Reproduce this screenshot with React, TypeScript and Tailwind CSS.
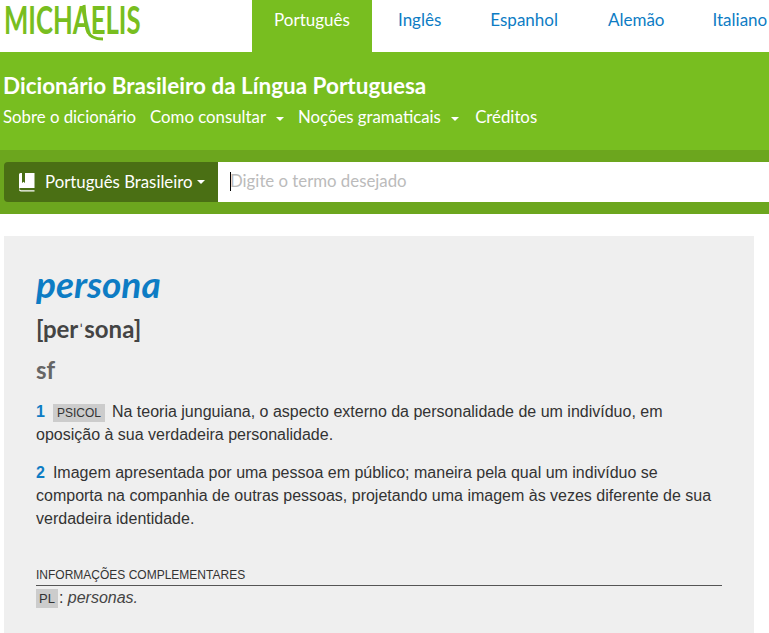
const tabs = ["Português", "Inglês", "Espanhol", "Alemão", "Italiano"];
const head = { fontFamily: "Lato, 'Open Sans', sans-serif" };
const body = { fontFamily: "'Liberation Sans', Arial, sans-serif" };

const Caret = () => <span className="ml-[6px] inline-block align-middle border-x-[4px] border-t-[4px] border-x-transparent border-t-white" />;

const App = () => {
  return (
    <div className="w-[769px] h-[633px] overflow-hidden bg-white" style={head}>
      <nav className="h-[52px] flex">
        <div className="w-[252px] shrink-0 relative pl-[4px]">
          <span className="block origin-left -mt-[3px] scale-x-[0.66] text-[39px] leading-[44px] font-bold text-[#78be20] whitespace-nowrap">MICHAELIS</span>
          <svg className="absolute left-[76px] top-[4px]" width="30" height="38" viewBox="0 0 30 38" fill="none">
            <path d="M8 1 C 9 12, 9 22, 12 28 C 14 33, 20 35, 27 35" stroke="#78be20" strokeWidth="3" />
          </svg>
        </div>
        <div className="flex text-[17px] shrink-0">
          {tabs.map((t, i) => (
            <a key={t} className={`h-[52px] flex items-center pb-[12px] whitespace-nowrap ${i === 0 ? "w-[120px] justify-center bg-[#78be20] text-white" : "text-[#0d7cc4]"} ${i === 1 ? "ml-[26px]" : ""} ${i === 2 ? "ml-[49px]" : ""} ${i === 3 ? "ml-[50px]" : ""} ${i === 4 ? "ml-[48px]" : ""}`}>
              {t}
            </a>
          ))}
        </div>
      </nav>

      <header className="h-[98px] bg-[#78be20] text-white pl-[3px] pt-[21px]">
        <h1 className="text-[22.5px] leading-[26px] font-bold">Dicionário Brasileiro da Língua Portuguesa</h1>
        <div className="flex mt-[6px] gap-[14px] text-[16.8px] leading-[24px] whitespace-nowrap">
          <a>Sobre o dicionário</a>
          <a>Como consultar <Caret /></a>
          <a>Noções gramaticais <Caret /></a>
          <a className="ml-[2px]">Créditos</a>
        </div>
      </header>

      <div className="h-[64px] bg-[#6ca61e] pl-[4px] pt-[12px]">
        <div className="flex h-[40px]">
          <button className="w-[214px] bg-[#4a6f14] rounded-l-[4px] text-white flex items-center pl-[14px] text-[16.8px] whitespace-nowrap">
            <svg width="17" height="19" viewBox="0 0 17 19" fill="white">
              <path d="M1 1.5 A1.5 1.5 0 0 1 2.5 0 H4 V10 L5.5 8.8 L7 10 V0 H16.5 V15 H2.5 A1.5 1.5 0 0 0 1 16 Z" />
              <path d="M1 16.5 A2 2 0 0 0 3 18.5 H16.5 V17.2 H3 A1 1 0 0 1 2 16.5 Z" />
            </svg>
            <span className="ml-[10px]">Português Brasileiro</span>
            <span className="ml-[4px] border-x-[4px] border-t-[4px] border-x-transparent border-t-white" />
          </button>
          <div className="flex-1 bg-white flex items-center pl-[12px] pb-[2px] text-[16.8px] text-[#bbb]">
            <span className="w-[1px] h-[19px] bg-black -mr-[1px]" />
            Digite o termo desejado
          </div>
        </div>
      </div>

      <main className="mt-[22px] ml-[4px] w-[750px] h-[400px] bg-[#efefef] px-[32px] pt-[27px] text-[#333]">
        <h2 className="text-[37px] leading-[42px] italic font-bold text-[#0d7cc4]">persona</h2>
        <div className="mt-[10px] text-[24px] leading-[28px] font-bold text-[#444]">[per<span className="font-normal text-[16px] mx-[1px] align-[2px] leading-none">ˈ</span>sona]</div>
        <div className="mt-[13px] text-[24px] leading-[28px] font-bold text-[#666]">sf</div>
        <div style={body} className="text-[16px] leading-[23px]">
          <p className="mt-[16px]">
            <b className="text-[#0d7cc4] mr-[8px]">1</b>
            <span className="bg-[#ccc] text-[12px] leading-none px-[4px] py-[2px] mr-[7px]">PSICOL</span>
            Na teoria junguiana, o aspecto externo da personalidade de um indivíduo, em oposição à sua verdadeira personalidade.
          </p>
          <p className="mt-[15px]">
            <b className="text-[#0d7cc4] mr-[8px]">2</b>
            Imagem apresentada por uma pessoa em público; maneira pela qual um indivíduo se comporta na companhia de outras pessoas, projetando uma imagem às vezes diferente de sua verdadeira identidade.
          </p>
          <div className="mt-[36px] text-[12px] leading-[18px] border-b border-[#555] pb-[1px]">INFORMAÇÕES COMPLEMENTARES</div>
          <p className="leading-[20px] mt-[2px]">
            <span className="bg-[#ccc] text-[13px] leading-none px-[3px] py-[2px] mr-[1px]">PL</span>: <i className="text-[#444]">personas.</i>
          </p>
        </div>
      </main>
    </div>
  );
};

export default App;
